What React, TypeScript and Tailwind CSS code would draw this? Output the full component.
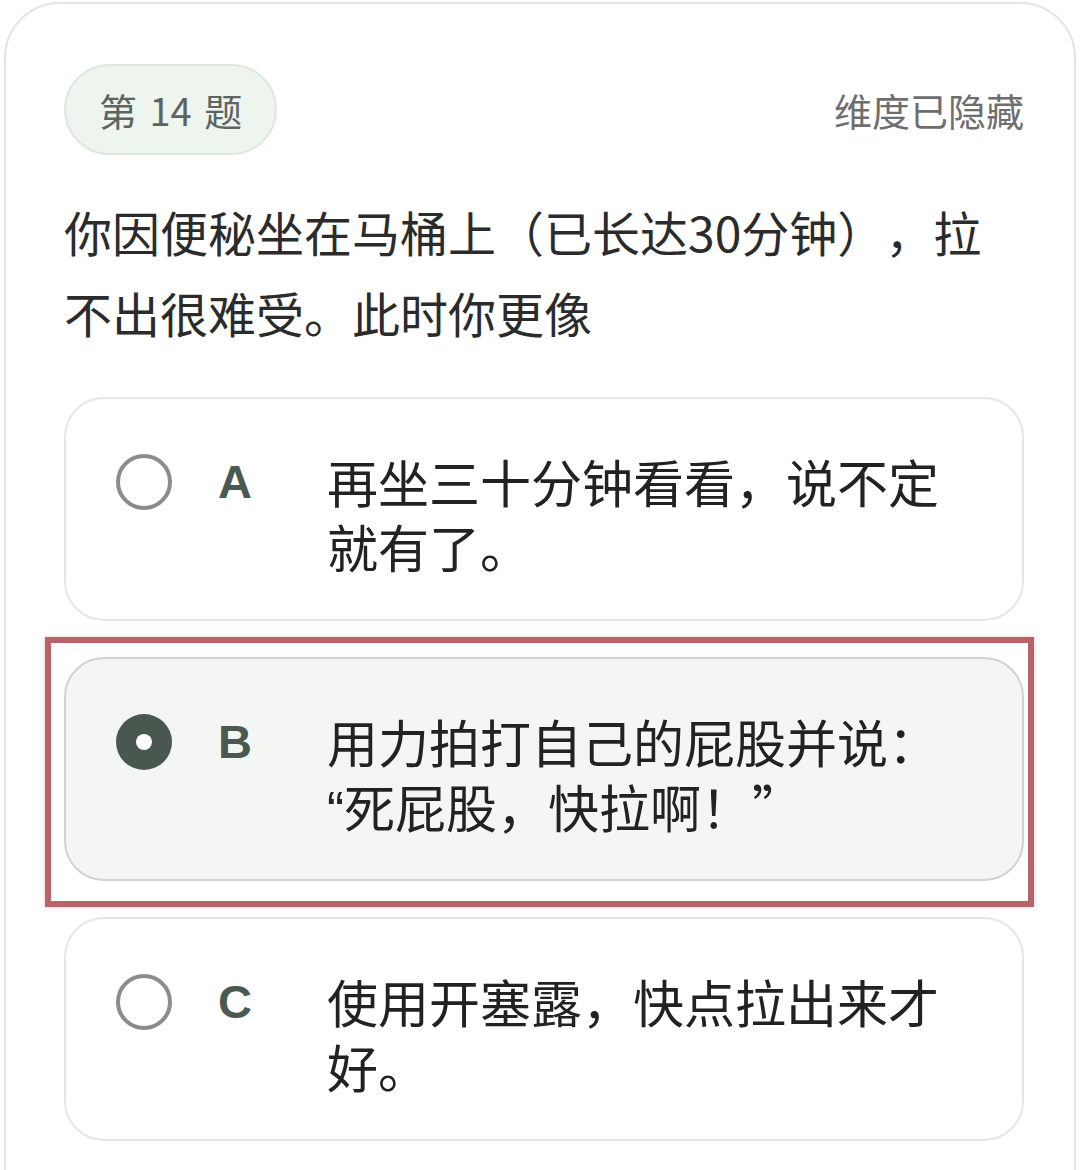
import React from "react";

type Opt = { key: string; text: React.ReactNode; selected: boolean };

const options: Opt[] = [
  { key: "A", text: "再坐三十分钟看看，说不定就有了。", selected: false },
  {
    key: "B",
    text: (
      <>
        <span>用力拍打自己的屁股并说：</span>
        <wbr />
        <span className="font-['Liberation_Sans',sans-serif] leading-none">“</span>死屁股，快拉啊！”
      </>
    ),
    selected: true,
  },
  { key: "C", text: "使用开塞露，快点拉出来才好。", selected: false },
];

function Radio({ checked }: { checked: boolean }) {
  if (checked) {
    return (
      <div className="mt-[5px] flex h-[56px] w-[56px] shrink-0 items-center justify-center rounded-full bg-[#4a574e]">
        <div className="h-[16px] w-[16px] rounded-full bg-white" />
      </div>
    );
  }
  return <div className="mt-[5px] h-[56px] w-[56px] shrink-0 rounded-full border-[4px] border-[#8c8c8c]" />;
}

function OptionCard({ opt }: { opt: Opt }) {
  return (
    <div
      className={`flex items-start rounded-[40px] border-2 pt-[50px] pb-[40px] pl-[50px] pr-[56px] ${
        opt.selected ? "border-[#cfd4cf] bg-[#f3f6f3]" : "border-[#e6e6e6] bg-white"
      }`}
    >
      <Radio checked={opt.selected} />
      <div className="ml-[46px] w-[109px] shrink-0 font-['Liberation_Sans',sans-serif] text-[47px] font-bold leading-[65px] text-[#4b5a50]">
        {opt.key}
      </div>
      <div className="h-[130px] flex-1 text-[51px] leading-[65px] text-[#222] [text-spacing-trim:space-all]">{opt.text}</div>
    </div>
  );
}

export default function App() {
  return (
    <div className="h-[1170px] overflow-hidden bg-white px-[4px] pt-[2px] font-['Noto_Sans_CJK_SC','Noto_Sans',sans-serif]">
      <div className="min-h-[1300px] rounded-[56px] border-2 border-[#e4e4e4] bg-white pl-[58px] pr-[50px] pt-[60px]">
        {/* header */}
        <div className="flex items-center justify-between">
          <div className="flex h-[91px] items-center rounded-full border-2 border-[#dfe7df] bg-[#eef4ee] px-[33px] text-[38px] text-[#5c655f] [word-spacing:4px]">
            第 14 题
          </div>
          <div className="text-[38px] text-[#6e6e6e]">维度已隐藏</div>
        </div>

        {/* question */}
        <p className="mt-[36px] text-[48px] leading-[81px] text-[#2b2b2b] [text-spacing-trim:space-all]">
          你因便秘坐在马桶上（已长达30分钟），拉不出很难受。此时你更像
        </p>

        {/* options */}
        <div className="mt-[44px] flex flex-col">
          <OptionCard opt={options[0]} />
          <div className="ml-[-19px] mr-[-10px] mt-[16px] border-[6px] border-[#b6646a] pb-[20px] pl-[13px] pr-[4px] pt-[14px] shadow-[0_0_4px_rgba(220,140,140,0.5)]">
            <OptionCard opt={options[1]} />
          </div>
          <div className="mt-[10px]">
            <OptionCard opt={options[2]} />
          </div>
        </div>
      </div>
    </div>
  );
}
